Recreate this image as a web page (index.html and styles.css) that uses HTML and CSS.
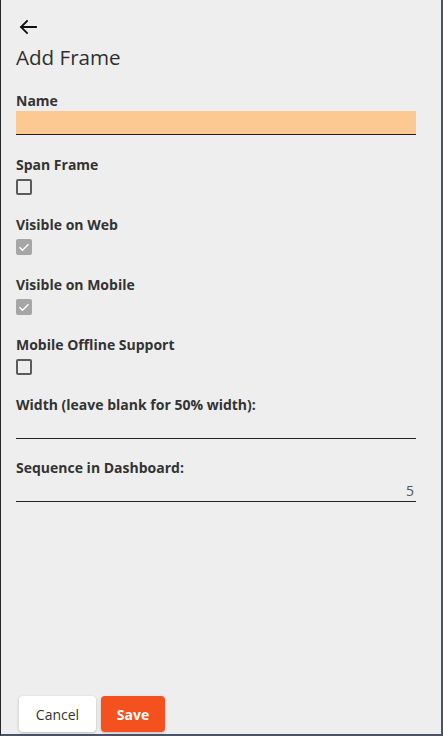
FILE: index.html
```html
<!DOCTYPE html>
<html lang="en">
<head>
<meta charset="utf-8">
<title>Add Frame</title>
<link rel="stylesheet" href="styles.css">
</head>
<body>
<div class="page">
  <div class="content">
    <button class="back" type="button" aria-label="Back">
      <svg width="24" height="24" viewBox="0 0 24 24"><path d="M20 12H5.2M11 6l-6 6 6 6" fill="none" stroke="#111" stroke-width="1.8" stroke-linecap="square"/></svg>
    </button>
    <h1 class="title">Add Frame</h1>
    <div class="form">
      <div class="field">
        <label class="label">Name</label>
        <div class="input input-highlight"></div>
      </div>
      <div class="field">
        <label class="label">Span Frame</label>
        <span class="check"></span>
      </div>
      <div class="field">
        <label class="label">Visible on Web</label>
        <span class="check checked"><svg width="16" height="16" viewBox="0 0 16 16"><path d="M3.5 8.2l3 3 6-6" fill="none" stroke="#fff" stroke-width="1.4"/></svg></span>
      </div>
      <div class="field">
        <label class="label">Visible on Mobile</label>
        <span class="check checked"><svg width="16" height="16" viewBox="0 0 16 16"><path d="M3.5 8.2l3 3 6-6" fill="none" stroke="#fff" stroke-width="1.4"/></svg></span>
      </div>
      <div class="field">
        <label class="label">Mobile Offline Support</label>
        <span class="check"></span>
      </div>
      <div class="field">
        <label class="label">Width (leave blank for 50% width):</label>
        <div class="input"></div>
      </div>
      <div class="field field-seq">
        <label class="label">Sequence in Dashboard:</label>
        <div class="input input-number">5</div>
      </div>
    </div>
  </div>
  <div class="actions">
    <button class="btn btn-cancel" type="button">Cancel</button>
    <button class="btn btn-save" type="button">Save</button>
  </div>
</div>
</body>
</html>
```
FILE: styles.css
```css
html, body {
  margin: 0;
  padding: 0;
  background: #eeeeee;
}
body {
  font-family: "Open Sans", "Noto Sans", sans-serif;
  color: #333;
}
.page {
  box-sizing: border-box;
  height: 736px;
  display: flex;
  flex-direction: column;
  background: #eeeeee;
  border-left: 1px solid #262626;
  border-right: 2px solid #4a5263;
  border-bottom: 2px solid #4a5263;
}
.content {
  padding: 15px 25px 0 15px;
}
.back {
  display: block;
  width: 24px;
  height: 24px;
  padding: 0;
  margin: 0;
  border: 0;
  background: none;
}
.back svg { display: block; }
.title {
  margin: 4px 0 0;
  font-size: 20.6px;
  line-height: 28px;
  font-weight: 400;
  color: #2f2f2f;
}
.form {
  margin-top: 20px;
}
.field {
  display: flex;
  flex-direction: column;
  align-items: flex-start;
  margin-bottom: 20px;
}
.field-seq { margin-top: -1px; }
.label {
  font-size: 14px;
  line-height: 20px;
  font-weight: 700;
  color: #333;
}
.input {
  box-sizing: border-box;
  align-self: stretch;
  height: 24px;
  border-bottom: 1px solid #222;
  font-size: 14px;
  line-height: 26px;
  color: #555;
}
.input-highlight {
  background: #fdc993;
}
.input-number {
  text-align: right;
  padding-right: 2px;
}
.check {
  box-sizing: border-box;
  width: 16px;
  height: 16px;
  margin-top: 4px;
  border: 2px solid #5a5a5a;
  border-radius: 2px;
}
.check.checked {
  border: 0;
  background: #a6a6a6;
}
.check svg { display: block; }
.actions {
  margin-top: auto;
  display: flex;
  gap: 5px;
  padding: 0 0 2px 18px;
}
.btn {
  height: 36px;
  border: 0;
  border-radius: 4px;
  font-family: "Open Sans", "Noto Sans", sans-serif;
  font-size: 14px;
  box-shadow: 0 1px 3px rgba(0,0,0,0.22);
  padding: 0;
}
.btn-cancel {
  width: 77px;
  background: #fff;
  color: #333;
}
.btn-save {
  width: 64px;
  background: #f4511e;
  color: #fff;
  font-weight: 700;
}
```
